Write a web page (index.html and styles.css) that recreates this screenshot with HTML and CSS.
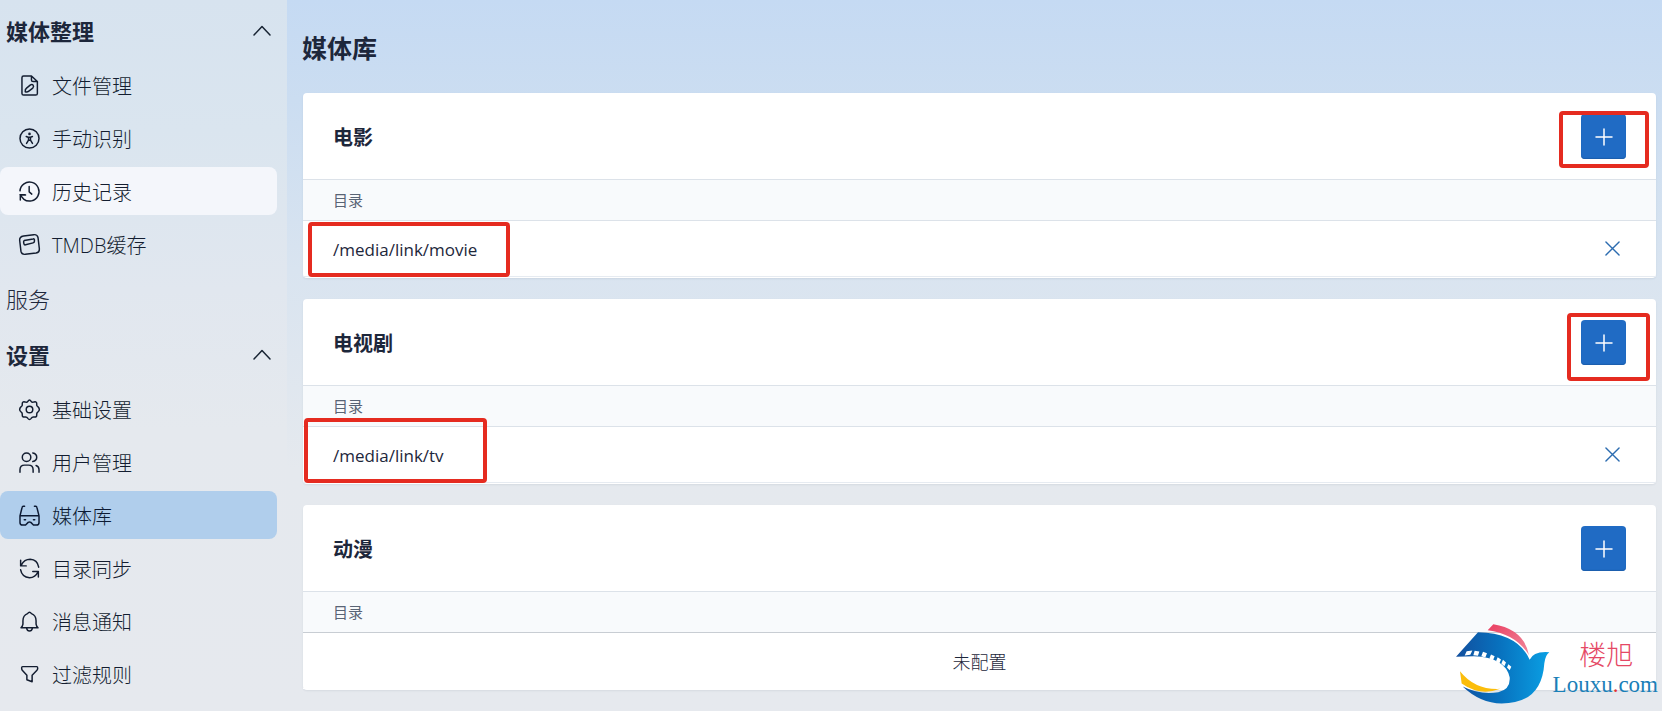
FILE: index.html
```html
<!DOCTYPE html>
<html lang="zh-CN">
<head>
<meta charset="utf-8">
<title>媒体库</title>
<link rel="stylesheet" href="styles.css">
</head>
<body>
<div class="app">
  <nav class="sidebar">
    <button class="group" type="button">媒体整理
      <svg class="chevron" viewBox="0 0 18 11"><path d="M1 10l8-8.500 8 8.500"/></svg>
    </button>
    <div class="items">
      <a class="item" href="#"><svg class="icon" viewBox="0 0 64 64"><path d="M14 3H38L56 20V56a5 5 0 0 1-5 5H14a5 5 0 0 1-5-5V8a5 5 0 0 1 5-5zM38 3v12a5 5 0 0 0 5 5h13M19 51q-1-7 4-11l12-10q5-3 8 1t-1 9L30 49q-5 4-11 2z"/></svg>文件管理</a>
      <a class="item" href="#"><svg class="icon" viewBox="0 0 64 64"><circle cx="32" cy="32" r="29"/><path d="M22 26l6 2h7l6-2M29 28v9l-6 10M35 28v9l6 10M29 37h6"/><circle class="solid" cx="32" cy="18" r="4"/></svg>手动识别</a>
      <a class="item hover" href="#"><svg class="icon" viewBox="0 0 64 64"><path d="M3 30A29 29 0 1 1 14 55M3 42l3 0h13M4 58V43l16 0M4 43l10 12M31 17v16l8 7"/></svg>历史记录</a>
      <a class="item" href="#"><svg class="icon" viewBox="0 0 64 64"><path d="M14 6L45 2q11-1 13 9l4 34q1 11-10 13L19 62q-11 1-13-9L2 19q-1-11 12-13zM16 20l27-5q4-1 4 3v4q0 4-4 5L20 33q-4 1-5-3l-1-6q0-3 2-4z"/></svg>TMDB缓存</a>
    </div>
    <a class="group plain" href="#">服务</a>
    <button class="group" type="button">设置
      <svg class="chevron" viewBox="0 0 18 11"><path d="M1 10l8-8.500 8 8.500"/></svg>
    </button>
    <div class="items">
      <a class="item" href="#"><svg class="icon" viewBox="0 0 64 64"><path d="M27 7q5-8 10 0 3 5 9 2 9-2 8 7-1 6 4 8 8 8 0 15-5 3-4 9 1 8-8 7-6-1-9 4-5 7-10 0-3-5-9-4-9 1-8-7 1-6-4-9-8-7 0-15 5-2 4-8-1-9 8-7 6 3 9-2z"/><circle cx="32" cy="32" r="10"/></svg>基础设置</a>
      <a class="item" href="#"><svg class="icon" viewBox="0 0 64 64"><circle cx="23" cy="16" r="13"/><path d="M3 62V54q0-14 14-14h12q14 0 14 14v8M42 3q12 2 12 13T42 29M52 41q9 3 9 13v8"/></svg>用户管理</a>
      <a class="item active" href="#"><svg class="icon" viewBox="0 0 64 64"><path d="M17 4h-4q-3 0-4 5L3 33M47 4h4q3 0 4 5l6 24M3 33h58v20q0 8-8 8h-9l-8-8q-4-3-8 0l-8 8h-9q-8 0-8-8zM16 45h4M44 45h4"/></svg>媒体库</a>
      <a class="item" href="#"><svg class="icon" viewBox="0 0 64 64"><path d="M7 22Q16 4 34 4q22 1 26 24M5 7v17h17M58 42Q50 60 32 60 9 58 5 36M59 58V41H42"/></svg>目录同步</a>
      <a class="item" href="#"><svg class="icon" viewBox="0 0 64 64"><path d="M26 8q6-8 12 0 14 5 14 22v10q1 7 6 11H6q5-4 6-11V30Q12 13 26 8zM23 52q2 9 9 9t9-9"/></svg>消息通知</a>
      <a class="item" href="#"><svg class="icon" viewBox="0 0 64 64"><path d="M11 8H54q3 0 3 5 0 4-3 7L40 34V54L24 48V34L10 19q-2-3-2-7 0-4 3-4z"/></svg>过滤规则</a>
    </div>
  </nav>
  <main class="main">
    <h1 class="title">媒体库</h1>
    <section class="card">
      <header class="card-head"><h2>电影</h2><button class="add" type="button" aria-label="添加"><svg viewBox="0 0 18 18"><path d="M9 1v16M1 9h16"/></svg></button></header>
      <table class="paths">
        <thead><tr><th colspan="2">目录</th></tr></thead>
        <tbody><tr><td>/media/link/movie</td><td class="action"><button class="remove" type="button" aria-label="删除"><svg viewBox="0 0 16 16"><path d="M1 1l14 14M15 1L1 15"/></svg></button></td></tr></tbody>
      </table>
      <span class="mark mark-movie"></span><span class="mark mark-add-movie"></span>
    </section>
    <section class="card">
      <header class="card-head"><h2>电视剧</h2><button class="add" type="button" aria-label="添加"><svg viewBox="0 0 18 18"><path d="M9 1v16M1 9h16"/></svg></button></header>
      <table class="paths">
        <thead><tr><th colspan="2">目录</th></tr></thead>
        <tbody><tr><td>/media/link/tv</td><td class="action"><button class="remove" type="button" aria-label="删除"><svg viewBox="0 0 16 16"><path d="M1 1l14 14M15 1L1 15"/></svg></button></td></tr></tbody>
      </table>
      <span class="mark mark-tv"></span><span class="mark mark-add-tv"></span>
    </section>
    <section class="card">
      <header class="card-head"><h2>动漫</h2><button class="add" type="button" aria-label="添加"><svg viewBox="0 0 18 18"><path d="M9 1v16M1 9h16"/></svg></button></header>
      <table class="paths none">
        <thead><tr><th colspan="2">目录</th></tr></thead>
        <tbody><tr><td class="empty" colspan="2">未配置</td></tr></tbody>
      </table>
    </section>
  </main>
  <div class="watermark">
    <svg class="bird" viewBox="75 370 285 245">
      <defs>
        <linearGradient id="blue" x1="0" y1="0" x2="1" y2="0"><stop offset="0" stop-color="#124f9e"/><stop offset=".45" stop-color="#0870bd"/><stop offset="1" stop-color="#0aa0e4"/></linearGradient>
        <linearGradient id="rose" x1="0" y1="0" x2="1" y2="1"><stop offset="0" stop-color="#ea3f62"/><stop offset="1" stop-color="#f08a9c"/></linearGradient>
      </defs>
      <path fill="url(#rose)" d="M190 373Q282 388 297 466Q258 402 173 391z"/>
      <path fill="#fff" d="M92 514Q78 465 140 469Q238 470 240 535Q225 572 190 570Q120 565 92 514z"/>
      <path fill="url(#blue)" d="M144 397Q265 400 299 480Q310 453 358 457Q346 465 343 490Q335 611 215 611Q150 610 98 560Q150 586 205 577Q242 568 239 532Q226 473 132 469L78 471z"/>
      <path fill="#fbbd0b" d="M90 514Q135 571 211 567Q150 590 95 551z"/>
      <path fill="#fff" d="M110 454l17-2-6 13-17 2zM134 453l14 2-4 13-14-2zM159 456l12 4-5 13-12-4zM183 464l11 5-5 12-11-5zM203 472l10 7-5 12-10-7zM219 480l9 8-5 11-9-8zM235 493l9 8-5 10-8-8z"/>
    </svg>
    <div class="brand"><span class="brand-cn">楼旭</span><span class="brand-en">Louxu<span class="dot">.</span>com</span></div>
  </div>
</div>
</body>
</html>
```
FILE: styles.css
```css
* { box-sizing: border-box; }
body {
  margin: 0;
  color: #1d273b;
  font-family: "Open Sans", "Noto Sans CJK SC", sans-serif;
  font-weight: 300;
}
button { font: inherit; color: inherit; background: none; border: 0; padding: 0; }
a { color: inherit; text-decoration: none; }
h1, h2 { margin: 0; font-weight: 700; }
svg { display: block; fill: none; stroke: currentColor; stroke-linecap: round; stroke-linejoin: round; }

.app {
  position: relative;
  display: flex;
  min-height: 100vh;
  overflow: hidden;
  background: linear-gradient(#c5daf3 0, #cbddf1 100px, #d9e4f0 270px, #e5e9ee 470px, #e6e9ee 100%);
}

.sidebar {
  display: flex;
  flex-direction: column;
  flex: 0 0 287px;
  padding: 3px 10px 0 0;
  background: linear-gradient(#d7e3ef 0, #dae5ef 130px, #e1e7ef 290px, #e5e9ee 430px, #e6e9ee 100%);
}
.group {
  display: flex;
  align-items: center;
  justify-content: space-between;
  height: 56px;
  padding: 0 6px 2px;
  font-size: 22px;
  font-weight: 700;
}
.plain { font-weight: 300; }
.chevron { width: 18px; height: 11px; stroke: #182433; stroke-width: 1.5; }
.items { display: grid; gap: 5px; padding: 2px 0 3px; }
.item {
  display: flex;
  align-items: center;
  gap: 12px;
  height: 48px;
  padding-left: 19px;
  border-radius: 8px;
  color: #131d30;
  font-size: 20px;
}
.item.hover { background: #f4f6fb; }
.item.active { background: #b0ceec; color: #0c1a33; }
.icon { width: 21px; height: 21px; stroke-width: 4.5; overflow: visible; }
.solid { fill: currentColor; stroke: none; }

.main {
  flex: 1;
  display: flex;
  flex-direction: column;
  gap: 21px;
  min-width: 0;
  padding: 24px 6px 20px 16px;
}
.title { font-size: 25px; line-height: 48px; margin-left: -1px; }
.card {
  position: relative;
  padding-bottom: 1px;
  background: #fff;
  border-radius: 4px;
  box-shadow: 0 1px 2px rgba(30, 50, 80, .08);
}
.card-head {
  display: flex;
  align-items: center;
  justify-content: space-between;
  padding: 21px 30px 20px;
  border-bottom: 1px solid #dce2e9;
}
.card-head h2 { padding-top: 2px; font-size: 20px; line-height: 28px; }
.add {
  display: grid;
  place-items: center;
  width: 45px;
  height: 45px;
  border-radius: 4px;
  background: #206bc4;
  color: #fff;
  box-shadow: inset 0 -1px 1px #1b5eac;
}
.add svg { width: 18px; height: 18px; stroke-width: 1.5; }
.paths { width: 100%; border-collapse: separate; border-spacing: 0; }
.paths th {
  height: 41px;
  padding: 0 30px;
  background: #f8fafc;
  border-bottom: 1px solid #dce2e9;
  color: #596475;
  font-size: 15px;
  font-weight: 400;
  line-height: 20px;
  text-align: left;
}
.paths.none th { border-bottom-color: #c8cdd3; }
.paths td {
  height: 56px;
  padding: 2px 30px 0;
  border-bottom: 1px solid #e6ebf1;
  font-size: 17px;
  font-weight: 400;
  line-height: 24px;
}
.paths .action { width: 100px; padding: 0 36px 0 0; }
.paths .empty { border-bottom-color: #fff; font-size: 18px; font-weight: 300; text-align: center; }
.remove { display: block; margin-left: auto; color: #2c6cb0; }
.remove svg { width: 15px; height: 15px; stroke-width: 1.5; }

.mark { position: absolute; border: 4px solid #e52b20; border-radius: 4px; pointer-events: none; }
.mark-movie { left: 5px; top: 129px; width: 202px; height: 55px; }
.mark-tv { left: 1px; top: 119px; width: 183px; height: 65px; }
.mark-add-movie { right: 7px; top: 18px; width: 90px; height: 57px; }
.mark-add-tv { right: 6px; top: 14px; width: 83px; height: 68px; }

.watermark { position: absolute; right: 4px; bottom: 6px; display: flex; gap: 3px; }
.bird { width: 95px; height: 82px; stroke: none; }
.brand { display: flex; flex-direction: column; align-items: center; padding-top: 15px; }
.brand-cn { color: #e54865; font-size: 27px; line-height: 34px; padding-left: 2px; }
.brand-en { color: #1a80b8; font: 400 23px/26px "Liberation Serif", serif; }
.dot { color: #e33030; }
```
